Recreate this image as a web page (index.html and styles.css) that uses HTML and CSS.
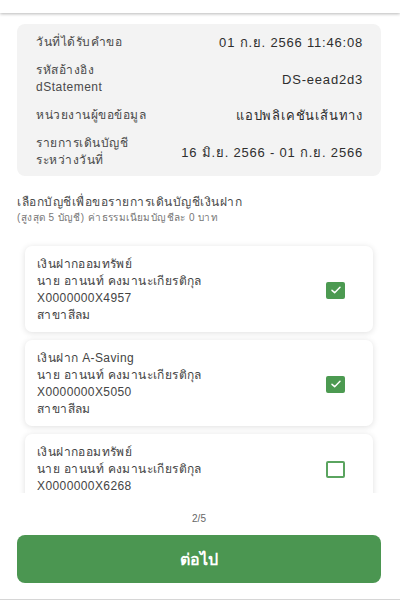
FILE: index.html
```html
<!DOCTYPE html>
<html lang="th">

<head>
    <meta charset="UTF-8">
    <meta name="viewport" content="width=device-width, initial-scale=1.0">
    <title>dStatement</title>
    <link rel="stylesheet" href="styles.css">
</head>

<body>
    <div class="topbar"></div>

    <main class="page">
        <section class="info-card">
            <div class="info-row">
                <div class="info-label">วันที่ได้รับคำขอ</div>
                <div class="info-value">01 ก.ย. 2566 11:46:08</div>
            </div>
            <div class="info-row">
                <div class="info-label">รหัสอ้างอิง<br>dStatement</div>
                <div class="info-value">DS-eead2d3</div>
            </div>
            <div class="info-row">
                <div class="info-label">หน่วยงานผู้ขอข้อมูล</div>
                <div class="info-value">แอปพลิเคชันเส้นทาง</div>
            </div>
            <div class="info-row">
                <div class="info-label">รายการเดินบัญชี<br>ระหว่างวันที่</div>
                <div class="info-value">16 มิ.ย. 2566 - 01 ก.ย. 2566</div>
            </div>
        </section>

        <p class="note">
            เลือกบัญชีเพื่อขอรายการเดินบัญชีเงินฝาก
            <span class="note-sub">(สูงสุด 5 บัญชี) ค่าธรรมเนียมบัญชีละ 0 บาท</span>
        </p>

        <div class="account-list">
            <label class="account-card">
                <div class="account-text">
                    <div>เงินฝากออมทรัพย์</div>
                    <div>นาย อานนท์ คงมานะเกียรติกุล</div>
                    <div>X0000000X4957</div>
                    <div>สาขาสีลม</div>
                </div>
                <span class="check checked">
                    <svg viewBox="0 0 20 18" width="14" height="12"><path d="M4 9.5l4 3.5 8-8" fill="none" stroke="#fff" stroke-width="2.2" stroke-linecap="round" stroke-linejoin="round"/></svg>
                </span>
            </label>
            <label class="account-card">
                <div class="account-text">
                    <div>เงินฝาก A-Saving</div>
                    <div>นาย อานนท์ คงมานะเกียรติกุล</div>
                    <div>X0000000X5050</div>
                    <div>สาขาสีลม</div>
                </div>
                <span class="check checked">
                    <svg viewBox="0 0 20 18" width="14" height="12"><path d="M4 9.5l4 3.5 8-8" fill="none" stroke="#fff" stroke-width="2.2" stroke-linecap="round" stroke-linejoin="round"/></svg>
                </span>
            </label>
            <label class="account-card">
                <div class="account-text">
                    <div>เงินฝากออมทรัพย์</div>
                    <div>นาย อานนท์ คงมานะเกียรติกุล</div>
                    <div>X0000000X6268</div>
                </div>
                <span class="check"></span>
            </label>
        </div>
    </main>

    <footer class="footer">
        <div class="counter">2/5</div>
        <button class="next-btn">ต่อไป</button>
    </footer>
</body>

</html>
```

FILE: styles.css
```css
* {
    box-sizing: border-box;
}

body {
    display: flex;
    flex-direction: column;
    width: 400px;
    height: 600px;
    margin: 0;
    overflow: hidden;
    background: #ffffff;
    color: #3a3a3a;
    font-family: "Liberation Sans", "Noto Sans", sans-serif;
    border-bottom: 1px solid #d6d6d6;
}

.topbar {
    flex: none;
    height: 13px;
    background: #ffffff;
    box-shadow: 0 1px 3px rgba(0, 0, 0, 0.28);
    position: relative;
    z-index: 2;
}

.page {
    flex: 1;
    overflow: hidden;
    padding: 11px 19px 0 17px;
}

.info-card {
    display: flex;
    flex-direction: column;
    gap: 11px;
    padding: 10px 18px 7px 19px;
    background: #f3f3f3;
    border-radius: 8px;
}

.info-row {
    display: flex;
    justify-content: space-between;
    align-items: center;
    font-size: 12px;
    line-height: 17px;
}

.info-label {
    color: #4a4a4a;
    letter-spacing: 0.5px;
}

.info-value {
    color: #2e2e2e;
    font-size: 13px;
    letter-spacing: 0.8px;
    text-align: right;
}

.note {
    margin: 19px 0 0;
    font-size: 12px;
    line-height: 15px;
    letter-spacing: 0.5px;
    color: #4a4a4a;
}

.note-sub {
    display: block;
    font-size: 10px;
    letter-spacing: 0.4px;
    color: #777777;
}

.account-list {
    display: flex;
    flex-direction: column;
    gap: 8px;
    margin-top: 21px;
    padding: 0 8px;
}

.account-card {
    display: flex;
    justify-content: space-between;
    align-items: center;
    padding: 10px 28px 8px 12px;
    background: #ffffff;
    border-radius: 7px;
    box-shadow: 0 1px 6px rgba(0, 0, 0, 0.13);
}

.account-text {
    font-size: 12px;
    line-height: 17px;
    letter-spacing: 0.4px;
    color: #444444;
}

.check {
    display: flex;
    justify-content: center;
    align-items: center;
    width: 19px;
    height: 17px;
    border: 2px solid #5aa45f;
    border-radius: 2px;
    background: #ffffff;
}

.check.checked {
    background: #4c9a51;
    border-color: #4c9a51;
}

.footer {
    flex: none;
    display: flex;
    flex-direction: column;
    padding: 19px 19px 16px 17px;
    background: #ffffff;
}

.counter {
    text-align: center;
    font-size: 10px;
    line-height: 14px;
    color: #666666;
}

.next-btn {
    height: 48px;
    margin-top: 9px;
    border: none;
    border-radius: 8px;
    background: #4b9651;
    color: #ffffff;
    font-family: inherit;
    font-size: 16px;
    font-weight: bold;
}
```
